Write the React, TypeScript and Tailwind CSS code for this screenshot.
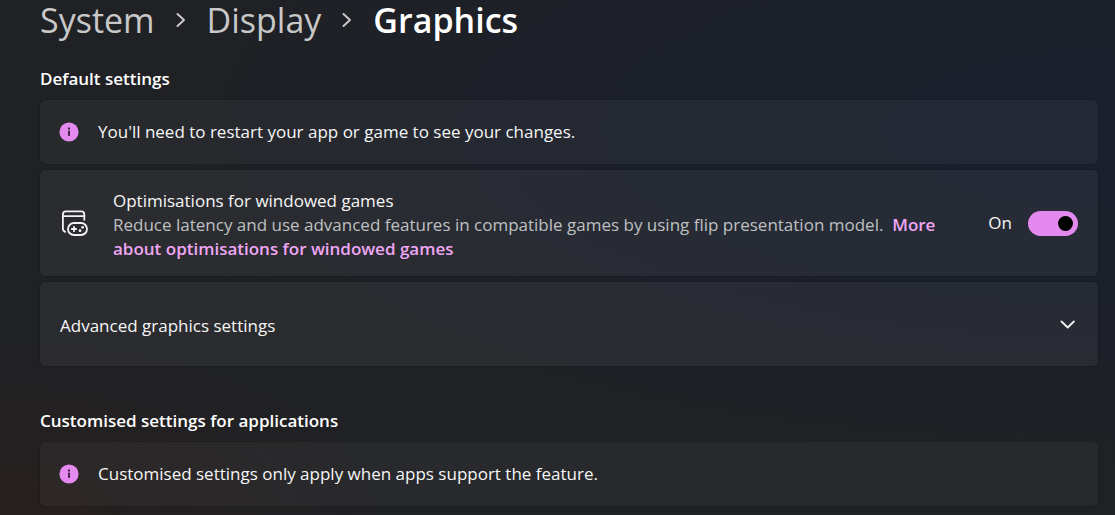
import { useState, type ReactNode } from "react";

const GameWindowIcon = () => (
  <svg
    viewBox="0 0 28 28"
    className="h-7 w-7 shrink-0"
    fill="none"
    stroke="#f4f4f4"
    strokeWidth="1.8"
    strokeLinecap="round"
    strokeLinejoin="round"
    aria-hidden="true"
  >
    <path d="M5.2 22.8C3.8 22.3 2.9 21.200 2.900 19.600V5.400c0-1.800 1.200-3 3-3h15.400c1.800 0 3 1.200 3 3v5.400" />
    <path d="M3 7.200h21.200" />
    <rect x="8" y="14" width="19" height="12" rx="6" />
    <path d="M14 17.800v4.400M11.800 20h4.400" />
    <g fill="#f4f4f4" stroke="none">
      <circle cx="22.600" cy="18.300" r="1.400" />
      <circle cx="20" cy="21.700" r="1.400" />
    </g>
  </svg>
);

const InfoIcon = () => (
  <svg viewBox="0 0 20 20" className="h-5 w-5 shrink-0" aria-hidden="true">
    <circle cx="10" cy="10" r="9.600" fill="#e48aee" />
    <rect x="9" y="5.400" width="2" height="2" rx="0.500" fill="#351c38" />
    <rect x="9.100" y="8.600" width="1.800" height="5.400" rx="0.500" fill="#351c38" />
  </svg>
);

const Separator = () => (
  <svg
    viewBox="0 0 10 16"
    className="h-4 w-[10px]"
    fill="none"
    stroke="#c8c8c8"
    strokeWidth="2"
    strokeLinecap="round"
    strokeLinejoin="round"
    aria-hidden="true"
  >
    <path d="M1.500 2l6.500 6-6.500 6" />
  </svg>
);

const InfoBar = ({ children }: { children: ReactNode }) => (
  <div className="flex min-h-16 items-center gap-[19px] rounded-[5px] bg-white/4 px-[19px] shadow-[0_0_0_1px_rgba(0,0,0,0.12)]">
    <InfoIcon />
    <p>{children}</p>
  </div>
);

export default function App() {
  const [optimised, setOptimised] = useState(true);
  const [expanded, setExpanded] = useState(false);

  return (
    <main className="min-h-screen bg-[#202124] bg-[radial-gradient(ellipse_at_0%_100%,#271f1e_0%,transparent_24%),radial-gradient(ellipse_at_100%_25%,#1a202d_0%,#1c202a_30%,transparent_65%)] pr-[17px] pb-[9px] pl-10 font-['Open_Sans',sans-serif] text-[17px] leading-6 text-[#f6f6f6]">
      <nav aria-label="Breadcrumb">
        <ol className="flex items-center gap-[21px] text-[34px] leading-10 font-medium text-[#c8c8c8]">
          <li>
            <a href="#system">System</a>
          </li>
          <li aria-hidden="true">
            <Separator />
          </li>
          <li>
            <a href="#display">Display</a>
          </li>
          <li aria-hidden="true">
            <Separator />
          </li>
          <li>
            <h1 className="font-semibold text-white">Graphics</h1>
          </li>
        </ol>
      </nav>

      <section className="mt-[27px] flex flex-col gap-[6px]">
        <h2 className="mb-[3px] font-semibold text-white">Default settings</h2>
        <InfoBar>
          You'll need to restart your app or game to see your changes.
        </InfoBar>

        <div className="flex items-center rounded-[5px] bg-white/5 px-5 shadow-[0_0_0_1px_rgba(0,0,0,0.15)]">
          <GameWindowIcon />
          <div className="ml-[25px] flex-1 pt-[19px] pb-[15px]">
            <label htmlFor="windowed-games">Optimisations for windowed games</label>
            <p className="text-[#bfc0c2]">
              Reduce latency and use advanced features in compatible games by
              using flip presentation model.&nbsp;{" "}
              <a href="#more" className="font-semibold text-[#f0a6f4]">
                More about optimisations for windowed games
              </a>
            </p>
          </div>
          <span className="mr-4 ml-8">{optimised ? "On" : "Off"}</span>
          <input
            id="windowed-games"
            type="checkbox"
            role="switch"
            checked={optimised}
            onChange={(e) => setOptimised(e.target.checked)}
            className="flex h-[25px] w-[50px] shrink-0 cursor-pointer appearance-none items-center rounded-full bg-[#8a8a8a] px-[5px] before:size-[15px] before:rounded-full before:bg-black checked:justify-end checked:bg-[#e48aee]"
          />
        </div>

        <button
          type="button"
          aria-expanded={expanded}
          onClick={() => setExpanded(!expanded)}
          className="flex min-h-[84px] items-center justify-between rounded-[5px] bg-white/5 px-5 text-left shadow-[0_0_0_1px_rgba(0,0,0,0.15)]"
        >
          <span className="pt-1">Advanced graphics settings</span>
          <svg
            viewBox="0 0 20 20"
            className="h-5 w-5"
            fill="none"
            stroke="#f4f4f4"
            strokeWidth="1.800"
            strokeLinecap="round"
            strokeLinejoin="round"
            aria-hidden="true"
          >
            <path d={expanded ? "M3.500 13l6.200-6 6.200 6" : "M3.500 7.500l6.200 6 6.200-6"} />
          </svg>
        </button>
      </section>

      <section className="mt-[43px] flex flex-col gap-[9px]">
        <h2 className="font-semibold text-white">
          Customised settings for applications
        </h2>
        <InfoBar>Customised settings only apply when apps support the feature.</InfoBar>
      </section>
    </main>
  );
}
